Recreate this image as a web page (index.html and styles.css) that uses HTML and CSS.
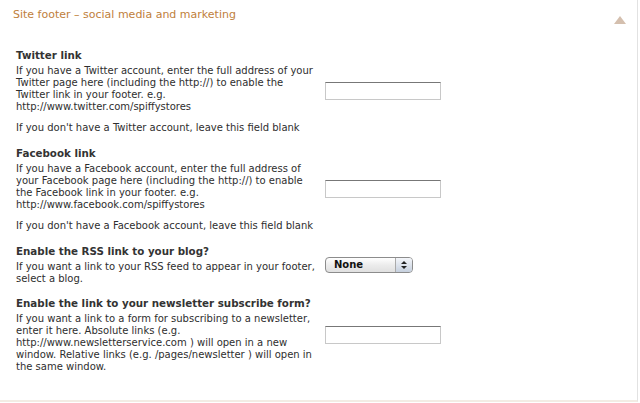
FILE: index.html
```html
<!DOCTYPE html>
<html lang="en">
<head>
  <meta charset="UTF-8">
  <title>Site footer settings</title>
  <link rel="stylesheet" href="styles.css">
</head>
<body>
  <div class="panel">
    <div class="panel-head">
      <h2>Site footer &ndash; social media and marketing</h2>
      <span class="toggle"></span>
    </div>

    <div class="field">
      <div class="info">
        <h3>Twitter link</h3>
        <p>If you have a Twitter account, enter the full address of your Twitter page here (including the http://) to enable the Twitter link in your footer. e.g. http://www.twitter.com/spiffystores</p>
        <p>If you don't have a Twitter account, leave this field blank</p>
      </div>
      <div class="control"><input type="text"></div>
    </div>

    <div class="field">
      <div class="info">
        <h3>Facebook link</h3>
        <p>If you have a Facebook account, enter the full address of your Facebook page here (including the http://) to enable the Facebook link in your footer. e.g. http://www.facebook.com/spiffystores</p>
        <p>If you don't have a Facebook account, leave this field blank</p>
      </div>
      <div class="control"><input type="text"></div>
    </div>

    <div class="field">
      <div class="info">
        <h3>Enable the RSS link to your blog?</h3>
        <p>If you want a link to your RSS feed to appear in your footer, select a blog.</p>
      </div>
      <div class="control">
        <div class="select">None<span class="arrows"></span></div>
      </div>
    </div>

    <div class="field">
      <div class="info">
        <h3>Enable the link to your newsletter subscribe form?</h3>
        <p>If you want a link to a form for subscribing to a newsletter, enter it here. Absolute links (e.g. http://www.newsletterservice.com ) will open in a new window. Relative links (e.g. /pages/newsletter ) will open in the same window.</p>
      </div>
      <div class="control"><input type="text"></div>
    </div>
  </div>
</body>
</html>
```

FILE: styles.css
```css
body {
  margin: 0;
  background: #fff;
  font-family: "DejaVu Sans", sans-serif;
  color: #2e2e2e;
}
.panel {
  width: 637px;
  height: 400px;
  border-right: 1px solid #e2e2e2;
  border-bottom: 2px solid #f3ece4;
  box-sizing: content-box;
}
.panel-head {
  display: flex;
  justify-content: space-between;
  align-items: center;
  padding: 5px 11px 0 13px;
  height: 18px;
}
.panel-head h2 {
  margin: 0;
  font-size: 11px;
  font-weight: normal;
  color: #c0803c;
}
.toggle {
  width: 0;
  height: 0;
  margin-top: 12px;
  border-left: 6px solid transparent;
  border-right: 6px solid transparent;
  border-bottom: 8px solid #d4bfae;
}
.field {
  display: flex;
  align-items: center;
  padding: 0 16px;
  margin-top: 12px;
}
.panel-head + .field {
  margin-top: 25px;
}
.field:last-child {
  margin-top: 11px;
}
.info {
  width: 300px;
  flex: none;
}
.info h3 {
  margin: 0 0 3px;
  font-size: 10.3px;
  line-height: 14px;
  color: #333;
}
.info p {
  margin: 0 0 9px;
  font-size: 10px;
  line-height: 12px;
}
.info p:last-child {
  margin-bottom: 0;
}
.control {
  margin-left: 9px;
}
input {
  display: block;
  width: 116px;
  height: 18px;
  box-sizing: border-box;
  border: 1px solid #c8c8c8;
  border-top-color: #777;
  background: #fff;
  margin: 0;
}
.select {
  position: relative;
  width: 88px;
  height: 16px;
  box-sizing: border-box;
  border: 1px solid #8c8c8c;
  border-radius: 4px;
  background: linear-gradient(#fff, #ececec 50%, #e0e0e0);
  font-size: 10px;
  font-weight: bold;
  line-height: 14px;
  padding-left: 8px;
  color: #111;
}
.arrows {
  position: absolute;
  right: 0;
  top: 0;
  width: 16px;
  height: 14px;
  border-left: 1px solid #aaa;
  border-radius: 0 3px 3px 0;
  background: linear-gradient(#f4f6fa, #c6d0de);
}
.arrows::before,
.arrows::after {
  content: "";
  position: absolute;
  left: 5px;
  border-left: 3px solid transparent;
  border-right: 3px solid transparent;
}
.arrows::before {
  top: 3px;
  border-bottom: 3px solid #222;
}
.arrows::after {
  top: 8px;
  border-top: 3px solid #222;
}
```
